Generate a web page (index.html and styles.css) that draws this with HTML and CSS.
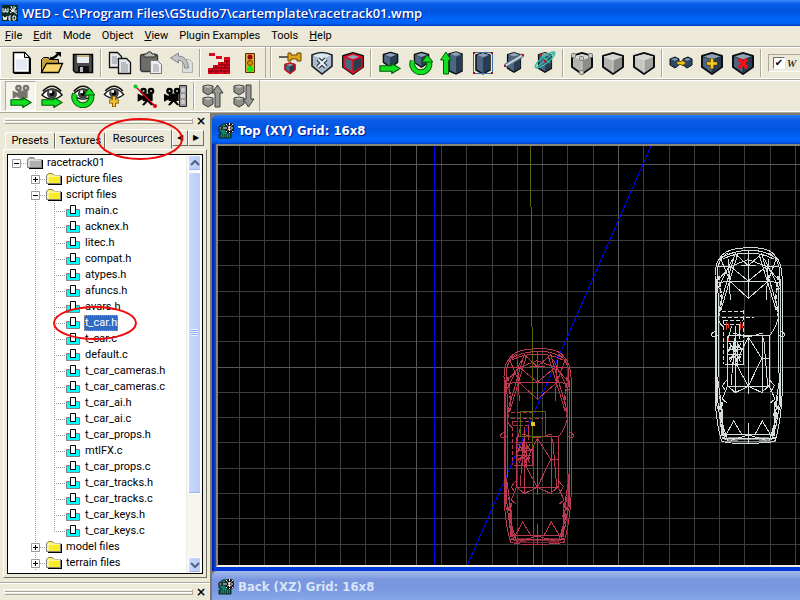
FILE: index.html
```html
<!DOCTYPE html>
<html lang="en">
<head>
    <meta charset="UTF-8">
    <meta name="viewport" content="width=device-width, initial-scale=1.0">
    <title>WED - racetrack01.wmp</title>
    <link rel="stylesheet" href="styles.css">
</head>
<body>
    <!-- icon set -->
    <svg class="defs" aria-hidden="true">
        <symbol id="logo" viewBox="0 0 16 16">
            <path fill="#0b2b22" d="M0 0h16v16H0z"/>
            <path stroke="#fff" fill="none" d="M1 3v4h2V4h1v3h2V3M8 4l3 3M14 2l-3 4M9 1l2 5M15 6h-5M8 8l3-2 4 3M12 1v4"/>
            <path stroke="#fff" fill="none" d="M1 11l1 4 1-3 1 3 1-4M7 11h2M7 13h2M7 15h2M7 11v4M11 11v4h2l1-2-1-2h-2"/>
        </symbol>
        <symbol id="view" viewBox="0 0 16 16">
            <path fill="#0f8468" stroke="#06231c" d="M1 4l4-3h4v9h4v5H1v-4h2V9H1z"/>
            <path stroke="#06231c" stroke-dasharray="1 1" d="M2 12h11M2 14h11"/>
            <path fill="#fff" stroke="#111" d="M1 4h3v2H1zM4 4h4v2H4z"/>
            <path stroke="#111" stroke-width="3" d="M8 1l7 8M15 1L8 9M11.5 0v10M7 5h9"/>
            <path stroke="#fff" stroke-dasharray="2 1" d="M8 1l7 8M15 1L8 9M11.5 0v10M7 5h9"/>
        </symbol>
        <symbol id="new" viewBox="0 0 24 24">
            <path fill="#fff" stroke="#000" stroke-width="1.5" d="M4.500 1.500h11l5 5v15h-16z"/>
            <path fill="#dfe8f0" stroke="#000" d="M15.500 1.500v5h5z"/>
            <path stroke="#000" stroke-width="2" d="M21 7v15H5" fill="none"/>
            <path fill="#e4eaf3" d="M7 8h11v11H7z"/>
        </symbol>
        <symbol id="open" viewBox="0 0 24 24">
            <path fill="#c9a03a" stroke="#000" d="M1.500 21V8.500l2-2h5l1 2h9V12"/>
            <path fill="#f7d76c" stroke="#000" stroke-width="1.300" d="M1.500 21.500l5-9h16l-4 9z"/>
            <path fill="none" stroke="#000" stroke-width="2.500" d="M10 7q4 1 8-4"/>
            <path d="M15 1h6v5z"/>
        </symbol>
        <symbol id="save" viewBox="0 0 24 24">
            <path fill="#4a4a4a" stroke="#000" stroke-width="1.500" d="M2.500 3.500h19v18h-17l-2-2z"/>
            <path fill="#e8edf2" d="M6 4h12v8H6z"/>
            <path fill="#c6b27a" d="M6 4h12v2H6z"/>
            <path fill="#111" d="M7 15h11v6H7z"/>
            <path fill="#b8bcc0" d="M9 16h3v5H9z"/>
        </symbol>
        <symbol id="copy" viewBox="0 0 24 24">
            <g fill="#e6e9ec" stroke="#111" stroke-width="1.300">
                <path d="M1.500 1.500h8l4 4v11h-12z"/>
                <path d="M10.500 7.500h8l4 4v11h-12z"/>
            </g>
            <path stroke="#8b9096" d="M4 6h5M4 8h6M4 10h6M4 12h5M13 12h5M13 14h7M13 16h7M13 18h7M13 20h7"/>
        </symbol>
        <symbol id="paste" viewBox="0 0 24 24">
            <rect x="1.500" y="3.500" width="17" height="17" rx="2" fill="#6d6d6a" stroke="#333" stroke-width="1.300"/>
            <path fill="#bcbcb8" stroke="#333" d="M5 6V3h3l1-2h3l1 2h3v3z"/>
            <path fill="#eceff1" stroke="#777" d="M11.500 9.500h7l4 4v9h-11z"/>
            <path stroke="#999" d="M14 14h5M14 16h6M14 18h6M14 20h6"/>
        </symbol>
        <symbol id="undo" viewBox="0 0 24 24">
            <path fill="#dedede" stroke="#b0b0ac" d="M12.500 8.500h7l3 3v10h-10z"/>
            <path fill="#c2c4c4" stroke="#85878a" d="M.500 7l8-5v3q9 0 10 12h-4q0-7-6-8v3z"/>
        </symbol>
        <symbol id="bricks" viewBox="0 0 24 24">
            <path fill="#e0081c" d="M2 2h6v3H2zM9 5h6v3H9zM17 6h6v17H1v-6h5v-3h5v-3h6z"/>
            <path stroke="#6c0010" d="M1 20h22M6 17h17M11 14h12M17 10h6M5 17v3M9 14v3M9 20v3M15 11v3M14 17v3M18 14v3M18 20v3M20 10v3M4 20v3"/>
        </symbol>
        <symbol id="lights" viewBox="0 0 24 24">
            <path fill="#d8a838" stroke="#5a3000" d="M7.500 2.500h9v19h-9z"/>
            <circle cx="12" cy="6" r="2.500" fill="#a00010"/>
            <circle cx="12" cy="12" r="2.500" fill="#d89400" stroke="#704000"/>
            <circle cx="12" cy="18" r="3" fill="#10e820"/>
        </symbol>
        <symbol id="cube" viewBox="0 0 24 24">
            <path fill="var(--left)" stroke="#0a0f14" stroke-width="2" stroke-linejoin="round" d="M2 5l10-3 10 3v11l-10 7-10-7z"/>
            <path fill="var(--top)" d="M3 5.500L12 3l9 2.500L12 9z"/>
            <path fill="var(--right)" d="M12 9l9-3.500v10L12 22z"/>
            <path fill="none" stroke="var(--edge)" stroke-width=".8" d="M3 5.500L12 9l9-3.500M12 9v12.500"/>
        </symbol>
        <symbol id="arrow" viewBox="0 0 24 12">
            <path fill="#10e020" stroke="#045c08" stroke-width="1.200" d="M1 3h13V0.500l9 5.500-9 5.500V9H1z"/>
        </symbol>
        <symbol id="pin" viewBox="0 0 24 24">
            <path stroke="#333" stroke-width="1.500" d="M0 6h11"/>
            <path fill="#e0a818" stroke="#6b4500" d="M9 2h3v2h6V2h4v8h-4V8h-6v2H9z"/>
            <use href="#cube" x="5" y="11" width="12" height="12"/>
            <path fill="none" stroke="#d01020" stroke-width="1.500" d="M6 13.500l5-1.500 5 1.500v5l-5 4-5-4z"/>
        </symbol>
        <symbol id="shieldx" viewBox="0 0 24 24">
            <path fill="#a9bccb" stroke="#182028" stroke-width="1.600" d="M2 4q10-5 20 0v11l-10 8-10-8z"/>
            <path fill="#dce6ee" d="M3 4.500q9-4 18 0L12 8z"/>
            <path stroke="#25303c" stroke-width="4.500" d="M8 8l8 8M16 8l-8 8"/>
            <path stroke="#e8eef4" stroke-width="2.200" d="M8 8l8 8M16 8l-8 8"/>
        </symbol>
        <symbol id="redcube" viewBox="0 0 24 24">
            <use href="#cube" width="24" height="24"/>
            <path fill="none" stroke="#e80c18" stroke-width="1.500" d="M3 6l9-3 9 3v10l-9 6-9-6zM3 6l9 3 9-3M12 9v13"/>
        </symbol>
        <symbol id="move" viewBox="0 0 24 24">
            <use href="#cube" x="4" y="0" width="17" height="17"/>
            <use href="#arrow" x="0" y="12" width="24" height="11"/>
        </symbol>
        <symbol id="spin" viewBox="0 0 24 24">
            <path fill="none" stroke="#045c08" stroke-width="6" d="M4 10a8.500 8 0 1 0 15-1"/>
            <path fill="none" stroke="#10e020" stroke-width="4" d="M4 10a8.500 8 0 1 0 15-1"/>
            <path fill="#10e020" stroke="#045c08" d="M13 11l5-7 6 7z"/>
        </symbol>
        <symbol id="rotate" viewBox="0 0 24 24">
            <use href="#cube" x="4" y="0" width="17" height="17"/>
            <use href="#spin" width="24" height="24"/>
        </symbol>
        <symbol id="scale" viewBox="0 0 24 24">
            <path fill="#4c6580" stroke="#0a0f14" stroke-width="1.500" d="M9 3l7-2 6 2v17l-6 3-7-3z"/>
            <path fill="#293c52" d="M16 6l6-2v15l-6 3z"/>
            <path fill="#8fa3b6" d="M10 3l6-2 5 2-5 2z"/>
            <path fill="#10e020" stroke="#045c08" d="M3.500 23V9h-3L6 1l5 8H8.500v14z"/>
        </symbol>
        <symbol id="tall" viewBox="0 0 24 24">
            <path fill="#4c6580" stroke="#0a0f14" stroke-width="1.500" d="M5 4l7-2 7 2v15l-7 4-7-4z"/>
            <path fill="#293c52" d="M12 7l7-3v14l-7 4z"/>
            <path fill="#8fa3b6" d="M6 4l6-2 6 2-6 2z"/>
        </symbol>
        <symbol id="bounds" viewBox="0 0 24 24">
            <use href="#tall" width="24" height="24"/>
            <path fill="none" stroke="#3a6ea5" d="M2.500 1.500h19v21h-19z"/>
            <path fill="#901020" d="M2 1h2v2H2zM20 1h2v2h-2zM2 21h2v2H2zM20 21h2v2h-2z"/>
        </symbol>
        <symbol id="cut" viewBox="0 0 24 24">
            <use href="#tall" width="24" height="22"/>
            <path stroke="#5f7386" stroke-width="4" d="M3 15L21 4"/>
            <path stroke="#c8d4e0" stroke-width="2" d="M3 15L21 4"/>
            <path fill="#a01828" d="M2 14h2v2H2zM20 3h2v2h-2z"/>
        </symbol>
        <symbol id="orbit" viewBox="0 0 24 24">
            <use href="#tall" width="24" height="22"/>
            <g fill="none" stroke="#35b9a8" stroke-width="1.500">
                <ellipse cx="12" cy="9" rx="12" ry="3.500" transform="rotate(-38 12 9)"/>
                <path d="M3 17L22 1M7 3l10 9"/>
            </g>
            <path fill="#d01818" d="M7 3h2v2H7zM11 9h2v2h-2z"/>
        </symbol>
        <symbol id="points" viewBox="0 0 24 24">
            <use href="#cube" width="24" height="24"/>
            <g fill="#c8c8c4" stroke="#777">
                <rect x="1.500" y="2.500" width="4" height="4" rx="1"/>
                <rect x="18.500" y="2.500" width="4" height="4" rx="1"/>
                <rect x="9.500" y="5.500" width="4" height="4" rx="1"/>
                <rect x="9.500" y="19.500" width="4" height="4" rx="1"/>
            </g>
        </symbol>
        <symbol id="link" viewBox="0 0 24 24">
            <path fill="#2c4866" stroke="#0a0f14" d="M1 8l5-2 4 2v6l-4 3-5-3zM14 8l5-2 4 2v6l-5 3-4-3z"/>
            <path fill="#7f97b0" d="M2 8l4-1 3 1-3 2zM15 8l4-1 3 1-4 2z"/>
            <path fill="#f4c020" stroke="#6b4a00" stroke-width=".8" d="M8 10.500h5V9l4 3-4 3v-1.500H8z"/>
        </symbol>
        <symbol id="addcube" viewBox="0 0 24 24">
            <use href="#cube" width="24" height="24"/>
            <path stroke="#5a3c00" stroke-width="4" d="M12 7v11M6.500 12.500h11"/>
            <path stroke="#fbc926" stroke-width="2.600" d="M12 7.500v10M7 12.500h10"/>
        </symbol>
        <symbol id="delcube" viewBox="0 0 24 24">
            <use href="#cube" width="24" height="24"/>
            <path stroke="#fa0d14" stroke-width="3.500" d="M8 8l8 9M16 8l-8 9"/>
        </symbol>
        <symbol id="camera" viewBox="0 0 24 24">
            <circle cx="9" cy="6" r="4"/>
            <circle cx="18" cy="6" r="4"/>
            <path d="M8 9h12v9H8zM2 9l6 3v4l-6 3zM11 18h6l4 5h-3l-4-4-4 4H7z"/>
            <path fill="#eee" d="M8 5h2v2H8zM17 5h2v2h-2z"/>
        </symbol>
        <symbol id="cammove" viewBox="0 0 24 24">
            <use href="#camera" x="2" y="-1" width="20" height="20" fill="#77756d"/>
            <use href="#arrow" x="0" y="13" width="24" height="11"/>
        </symbol>
        <symbol id="eye" viewBox="0 0 24 24">
            <path fill="#fff" stroke="#111" stroke-width="1.500" d="M1 12Q12-1 23 12q-11 9-22 0z"/>
            <circle cx="12" cy="10.500" r="5.500" fill="#444"/>
            <circle cx="12" cy="10.500" r="2.500"/>
            <path fill="#fff" d="M9 7h3v3H9z"/>
            <path fill="none" stroke="#111" stroke-width="1.800" d="M2 8Q12-3 22 8"/>
        </symbol>
        <symbol id="eyemove" viewBox="0 0 24 24">
            <use href="#eye" y="0" width="24" height="22"/>
            <use href="#arrow" x="0" y="13" width="24" height="11"/>
        </symbol>
        <symbol id="eyespin" viewBox="0 0 24 24">
            <use href="#eye" y="0" width="24" height="22"/>
            <use href="#spin" width="24" height="24"/>
        </symbol>
        <symbol id="eyeadd" viewBox="0 0 24 24">
            <use href="#eye" y="0" width="24" height="21"/>
            <path stroke="#6b4a00" stroke-width="4" d="M12 12v11M7 17.500h10"/>
            <path stroke="#f7c12a" stroke-width="2.500" d="M12 12.500v10M7.500 17.500h9"/>
        </symbol>
        <symbol id="camoff" viewBox="0 0 24 24">
            <use href="#camera" x="3" y="2" width="20" height="20"/>
            <path stroke="#e00010" stroke-width="1.500" d="M2 2l20 20"/>
            <circle cx="2.500" cy="2.500" r="2" fill="#18c030"/>
            <circle cx="22" cy="22" r="2" fill="#e00010"/>
        </symbol>
        <symbol id="camwall" viewBox="0 0 24 24">
            <path fill="#999" stroke="#222" d="M15.500 1.500h7v21h-7z"/>
            <circle cx="19" cy="6" r="2.200" fill="#ccc"/>
            <circle cx="19" cy="12" r="2.200" fill="#ccc"/>
            <circle cx="19" cy="18" r="2.200" fill="#ccc"/>
            <use href="#camera" x="-2" y="2" width="20" height="20"/>
        </symbol>
        <symbol id="blocks" viewBox="0 0 24 24">
            <g fill="#8f8f8c" stroke="#3c3c3a">
                <path d="M2 2l5-1 5 1v6l-5 3-5-3zM2 14l5-1 5 1v6l-5 3-5-3z"/>
                <path fill="#c4c4c0" stroke="none" d="M2.500 2.500L7 1.500l4.500 1L7 4zM2.500 14.500l4.500-1 4.500 1L7 16z"/>
            </g>
        </symbol>
        <symbol id="blocksup" viewBox="0 0 24 24">
            <use href="#blocks" width="24" height="24"/>
            <path fill="#999" stroke="#3c3c3a" d="M14 23V9h-3l5.500-8L22 9h-3v14z"/>
        </symbol>
        <symbol id="blocksdown" viewBox="0 0 24 24">
            <use href="#blocks" width="24" height="24"/>
            <path fill="#999" stroke="#3c3c3a" d="M14 1v14h-3l5.500 8 5.500-8h-3V1z"/>
        </symbol>
        <symbol id="folder" viewBox="0 0 16 16">
            <path fill="#000" d="M2 14h14V5h-1v8H2z"/>
            <path fill="var(--folder)" stroke="#808080" d="M.500 12.500v-8l2-2h4l2 2h6v8z"/>
            <path stroke="#fff" fill="none" d="M2 12V5h12"/>
        </symbol>
        <symbol id="file" viewBox="0 0 16 16">
            <path fill="#0ff" stroke="#808080" d="M1.500 6.500h13v7h-13z"/>
            <path fill="#fff" stroke="#000" d="M5.500 2.500h5v8h-5z"/>
        </symbol>
        <symbol id="car" viewBox="0 0 300 660" fill="none" stroke-width="3">
            <path d="M62 50Q80 28 142 26T222 50Q242 70 243 110V470Q238 560 222 605Q215 612 142 613T62 605Q46 560 42 470V110Q42 70 62 50z"/>
            <path d="M54 62Q90 36 142 34T230 62M48 95Q55 55 80 42M237 95Q230 55 205 42M66 60Q100 42 142 42T218 60"/>
            <path d="M50 90Q54 300 50 480Q56 560 74 604M235 90Q230 300 236 480Q230 560 211 604M46 120V500M239 120V500"/>
            <path d="M102 44L52 218M108 52L60 212M95 60L50 150M182 44L233 218M176 52L225 212M190 60L235 150"/>
            <path d="M102 44L142 80 182 44M142 34V178M120 80H165M52 84L88 82 142 126 196 82 235 84M82 60L88 184M202 60L196 184"/>
            <path d="M45 130L88 128H196L240 130M88 128L142 178 200 128M88 82L45 130M196 82L240 130M60 62L88 128M225 62L200 128"/>
            <path d="M88 82L142 62 196 82M52 218Q48 250 66 262M233 218Q236 250 206 290"/>
            <path d="M42 278Q26 284 34 292L50 290M240 278Q256 284 248 292L234 290"/>
            <path d="M80 290H204V440L180 462M80 290V440L104 462M102 290V460M184 290V460M142 290V464M80 442H204"/>
            <path d="M96 282L142 294 186 282M142 294L182 358 142 442 104 372M184 358H206M102 296L90 440M188 296L200 440"/>
            <path d="M142 442L100 462M142 442L186 462M104 372L142 294M80 420L64 440 76 460M204 420L220 440 208 460"/>
            <path d="M80 440L64 480 78 492M204 440L222 480 208 492M56 470L70 600M230 470L214 600M64 490L58 560 78 600M220 490L226 560 206 600"/>
            <path d="M50 420L66 530M236 420L218 530M48 500L80 606M238 500L204 606M66 510L62 590M220 510L222 590"/>
            <path d="M76 586L98 546 122 586M162 586L184 546 208 586M142 552V612M76 586H208V598H76zM90 604L142 588 196 604"/>
            <path d="M60 606H224M70 600H214M80 594L204 606M204 594L80 606" opacity=".6"/>
            <path d="M53 110L62 180 54 230M232 110L224 180 232 230M56 500L66 600M228 500L218 600" stroke-dasharray="14 5" stroke-width="5"/>
            <!-- driver and engine block -->
            <path d="M64 218H126M64 234H160M70 244H126M70 256H126M126 214V378M66 244V376" stroke-dasharray="12 6"/>
            <path d="M80 306H126V376H80zM86 312L120 370M120 312L86 370M84 330H124M82 346H124M96 306V378M110 306V378M92 260L80 306M104 260V306M116 256V300M72 376H126"/>
            <path d="M82 338L90 320 102 330 112 318 122 332M84 360L96 350 108 362 120 352" stroke-width="5"/>
        </symbol>
    </svg>

    <header class="title-bar">
        <svg class="logo"><use href="#logo"/></svg>
        <h1>WED - C:\Program Files\GStudio7\cartemplate\racetrack01.wmp</h1>
    </header>

    <nav class="menu-bar">
        <button><u>F</u>ile</button>
        <button><u>E</u>dit</button>
        <button>Mode</button>
        <button>Object</button>
        <button><u>V</u>iew</button>
        <button>Plugin Examples</button>
        <button>Tools</button>
        <button><u>H</u>elp</button>
    </nav>

    <div class="toolbar-row">
        <div class="toolbar">
            <button aria-label="New"><svg><use href="#new"/></svg></button>
            <button aria-label="Open"><svg><use href="#open"/></svg></button>
            <button aria-label="Save"><svg><use href="#save"/></svg></button>
            <span class="sep"></span>
            <button aria-label="Copy"><svg><use href="#copy"/></svg></button>
            <button aria-label="Paste"><svg><use href="#paste"/></svg></button>
            <button aria-label="Undo"><svg><use href="#undo"/></svg></button>
            <span class="sep"></span>
            <button aria-label="Build"><svg><use href="#bricks"/></svg></button>
            <button aria-label="Run"><svg><use href="#lights"/></svg></button>
        </div>
        <div class="toolbar grow">
            <button aria-label="Pin"><svg><use href="#pin"/></svg></button>
            <button aria-label="Deselect"><svg><use href="#shieldx"/></svg></button>
            <button aria-label="Select"><svg><use href="#redcube"/></svg></button>
            <span class="sep"></span>
            <button aria-label="Move"><svg><use href="#move"/></svg></button>
            <button aria-label="Rotate"><svg><use href="#rotate"/></svg></button>
            <button aria-label="Scale"><svg><use href="#scale"/></svg></button>
            <button aria-label="Bounds"><svg><use href="#bounds"/></svg></button>
            <button aria-label="Cut"><svg><use href="#cut"/></svg></button>
            <button aria-label="Orbit"><svg><use href="#orbit"/></svg></button>
            <span class="sep"></span>
            <button class="gray" aria-label="Vertices"><svg><use href="#points"/></svg></button>
            <button class="gray" aria-label="Edges"><svg><use href="#cube"/></svg></button>
            <button class="gray face" aria-label="Faces"><svg><use href="#cube"/></svg></button>
            <span class="sep"></span>
            <button aria-label="Link"><svg><use href="#link"/></svg></button>
            <button aria-label="Add"><svg><use href="#addcube"/></svg></button>
            <button aria-label="Remove"><svg><use href="#delcube"/></svg></button>
            <span class="sep"></span>
            <div class="lock-box">
                <input type="checkbox" id="lock" checked>
                <label for="lock">W</label>
            </div>
        </div>
    </div>

    <div class="toolbar-row">
        <div class="toolbar">
            <button class="pressed" aria-label="Move camera"><svg><use href="#cammove"/></svg></button>
            <button aria-label="Move view"><svg><use href="#eyemove"/></svg></button>
            <button aria-label="Rotate view"><svg><use href="#eyespin"/></svg></button>
            <button aria-label="Zoom view"><svg><use href="#eyeadd"/></svg></button>
            <button aria-label="Camera off"><svg><use href="#camoff"/></svg></button>
            <button aria-label="Camera to wall"><svg><use href="#camwall"/></svg></button>
            <span class="sep"></span>
            <button aria-label="Scope up"><svg><use href="#blocksup"/></svg></button>
            <button aria-label="Scope down"><svg><use href="#blocksdown"/></svg></button>
        </div>
    </div>

    <div class="workspace">
        <aside class="dock">
            <div class="gripper"><span></span><button aria-label="Close">×</button></div>
            <div class="tabs">
                <button class="tab">Presets</button>
                <button class="tab">Textures</button>
                <button class="tab active">Resources
                    <svg class="ring"><ellipse cx="43" cy="21" rx="42" ry="20"/></svg>
                </button>
                <button class="arrow" aria-label="Scroll left">◀</button>
                <button class="arrow" aria-label="Scroll right">▶</button>
            </div>
            <div class="page">
                <div class="tree-box">
                    <ul class="tree" id="tree"></ul>
                    <div class="scrollbar">
                        <button aria-label="Up"><svg viewBox="0 0 10 8"><path d="M1 6l4-4 4 4"/></svg></button>
                        <div class="thumb"><i></i></div>
                        <button aria-label="Down"><svg viewBox="0 0 10 8"><path d="M1 2l4 4 4-4"/></svg></button>
                    </div>
                </div>
            </div>
            <div class="gripper lower"><span></span><button aria-label="Close">×</button></div>
        </aside>

        <main class="desk">
            <section class="window">
                <h2><svg><use href="#view"/></svg>Top (XY) Grid: 16x8</h2>
                <svg class="viewport" shape-rendering="crispEdges">
                    <path class="grid" d="M21.500 0v2000M46.500 0v2000M71.500 0v2000M97.500 0v2000M122.500 0v2000M147.500 0v2000M172.500 0v2000M223.500 0v2000M248.500 0v2000M274.500 0v2000M299.500 0v2000M324.500 0v2000M349.500 0v2000M375.500 0v2000M425.500 0v2000M451.500 0v2000M476.500 0v2000M501.500 0v2000M526.500 0v2000M552.500 0v2000M577.500 0v2000"/>
                    <path class="grid" d="M0 44.500h2000M0 69.500h2000M0 94.500h2000M0 119.500h2000M0 145.500h2000M0 170.500h2000M0 195.500h2000M0 246.500h2000M0 271.500h2000M0 296.500h2000M0 322.500h2000M0 347.500h2000M0 372.500h2000M0 398.500h2000"/>
                    <path class="grid major" d="M198.500 0v2000M400.500 0v2000M0 18.500h2000M0 221.500h2000"/>
                    <path class="axis" d="M216 0v2000M433 0L249 420"/>
                    <use class="car picked" href="#car" x="272" y="194" width="100" height="220"/>
                    <use class="car" href="#car" x="483" y="93" width="100" height="220"/>
                    <path class="cursor" d="M312.500 0L316 420M302.500 265.500h25v25h-25z"/>
                    <path fill="#e8c820" d="M313 276h4v4h-4z"/>
                    <path class="lamp" d="M508.500 176v8M510.500 178v4M522.500 176v8M524.500 178v4M510.500 192v3"/>
                </svg>
            </section>
            <section class="window inactive">
                <h2><svg><use href="#view"/></svg>Back (XZ) Grid: 16x8</h2>
            </section>
        </main>
    </div>

    <script src="tree.js"></script>
</body>
</html>
```
FILE: styles.css
```css
* {
    box-sizing: border-box;
}

body {
    margin: 0;
    height: 100vh;
    display: flex;
    flex-direction: column;
    overflow: hidden;
    background: #ece9d8;
    font: 11px/16px Roboto, Tahoma, sans-serif;
    color: #000;
}

button {
    border: none;
    background: none;
    padding: 0;
    font: inherit;
    color: inherit;
}

.defs {
    display: none;
}

/* title and menu */
.title-bar {
    flex: none;
    height: 26px;
    display: flex;
    align-items: center;
    gap: 4px;
    padding: 0 2px;
    background: linear-gradient(#3a8cf8 0, #0a5ce8 15%, #0055e0 45%, #0066fc 75%, #0060f4 90%, #0038b8 100%);
}

.logo {
    width: 16px;
    height: 16px;
}

h1,
h2 {
    margin: 0;
    color: #fff;
    white-space: nowrap;
    text-shadow: 1px 1px #0a1883;
}

h1 {
    font: 600 13px/18px "Open Sans", "Trebuchet MS", sans-serif;
}

h2 {
    font: bold 13px/18px "DejaVu Sans Condensed", "Trebuchet MS", sans-serif;
}

.menu-bar {
    flex: none;
    height: 20px;
    display: flex;
    align-items: center;
    gap: 11px;
    padding-left: 5px;
}

/* toolbars */
.toolbar-row {
    flex: none;
    display: flex;
    height: 33px;
    border-top: 1px solid #aca899;
    border-bottom: 1px solid #fff;
    box-shadow: inset 0 1px #fff;
}

.toolbar {
    --top: #8fa3b6;
    --left: #4c6580;
    --right: #293c52;
    --edge: #1b2838;
    display: flex;
    align-items: center;
    padding-left: 4px;
    border-left: 1px solid #fff;
    border-right: 1px solid #aca899;
}

.toolbar.grow {
    flex: 1;
    min-width: 0;
    margin-left: 4px;
    border-left: 1px solid #aca899;
    border-right: none;
    box-shadow: inset 1px 0 #fff;
}

.toolbar button {
    flex: none;
    width: 31px;
    height: 30px;
    display: flex;
    align-items: center;
    justify-content: center;
}

.toolbar svg {
    width: 24px;
    height: 24px;
}

.toolbar .pressed {
    border: 1px solid;
    border-color: #aca899 #fff #fff #aca899;
    background: #f5f4ec;
}

.toolbar .gray {
    --top: #d6d6d2;
    --left: #b2b2ae;
    --right: #8c8c88;
    --edge: #e2e2de;
}

.toolbar .face {
    --left: #c6c6c2;
    --right: #a2a29e;
}

.sep {
    flex: none;
    width: 2px;
    height: 28px;
    margin: 0 2px;
    border-left: 1px solid #aca899;
    border-right: 1px solid #fff;
}

.lock-box {
    flex: 1;
    min-width: 0;
    height: 18px;
    margin-left: 4px;
    padding-left: 4px;
    display: flex;
    align-items: center;
    overflow: hidden;
    border: 1px solid #aca899;
    border-right: none;
    border-bottom-color: #fff;
}

.lock-box input {
    flex: none;
    appearance: none;
    width: 12px;
    height: 12px;
    margin: 0;
    border: 1px solid;
    border-color: #716f64 #fff #fff #716f64;
    background: #fff;
}

.lock-box input:checked::before {
    content: "✔";
    display: block;
    font: 10px/10px "DejaVu Sans", sans-serif;
    text-align: center;
}

.lock-box label {
    margin-left: 2px;
    font: italic 11px/12px "Liberation Serif", serif;
}

/* left dock */
.workspace {
    flex: 1;
    min-height: 0;
    display: flex;
    border-top: 1px solid #aca899;
}

.dock {
    flex: none;
    width: 210px;
    display: flex;
    flex-direction: column;
}

.gripper {
    flex: none;
    height: 16px;
    display: flex;
    align-items: center;
    gap: 3px;
    padding-left: 4px;
}

.gripper span {
    width: 189px;
    height: 6px;
    border: 1px solid;
    border-color: #fff #aca899 #aca899 #fff;
    background: linear-gradient(#aca899 50%, #fff 50%);
    background-size: 100% 2px;
    background-position: 0 1px;
    background-repeat: no-repeat;
}

.gripper button {
    width: 8px;
    font: bold 12px/12px "DejaVu Sans", sans-serif;
}

.gripper.lower {
    height: 18px;
    border-top: 1px solid #aca899;
    box-shadow: inset 0 1px #fff;
}

.tabs {
    flex: none;
    height: 20px;
    display: flex;
    align-items: flex-end;
    padding-left: 5px;
}

.tab {
    position: relative;
    width: 50px;
    height: 17px;
    border: 1px solid;
    border-color: #fff #716f64 transparent #fff;
    border-radius: 2px 2px 0 0;
}

.tab.active {
    width: 67px;
    height: 20px;
}

.ring {
    position: absolute;
    left: -9px;
    top: -12px;
    width: 86px;
    height: 42px;
    z-index: 2;
    overflow: visible;
    pointer-events: none;
}

.ring ellipse {
    fill: none;
    stroke: #f00a0a;
    stroke-width: 2;
}

.tabs .arrow {
    width: 16px;
    height: 16px;
    margin-bottom: 3px;
    border: 1px solid;
    border-color: #fff #716f64 #716f64 #fff;
    font: 8px/12px "DejaVu Sans", sans-serif;
}

.page {
    flex: 1;
    min-height: 0;
    display: flex;
    margin: 0 3px 4px;
    padding: 4px 3px 3px;
    border: 1px solid;
    border-color: #fff #716f64 #716f64 #fff;
}

.tree-box {
    flex: 1;
    min-width: 0;
    display: flex;
    border: 1px solid #000;
    background: #fff;
    overflow: hidden;
}

.tree {
    flex: 1;
    min-width: 0;
    margin: 0;
    padding: 0;
    list-style: none;
}

.tree li {
    position: relative;
    display: flex;
    height: 16px;
    white-space: nowrap;
}

.tree svg.icon {
    flex: none;
    width: 16px;
    height: 16px;
    margin-right: 3px;
}

.tree li.root {
    --folder: #b0b0b0;
}

.tree li.folder {
    --folder: #f8ec28;
}

/* dotted connector cells */
.rail,
.toggle {
    flex: none;
    width: 19px;
    height: 16px;
}

.rail {
    background: repeating-linear-gradient(#999 0 1px, transparent 1px 2px) 8px 0 / 1px 16px no-repeat;
}

.rail.branch {
    background:
        repeating-linear-gradient(#999 0 1px, transparent 1px 2px) 8px 0 / 1px 16px no-repeat,
        repeating-linear-gradient(90deg, #999 0 1px, transparent 1px 2px) 8px 8px / 11px 1px no-repeat;
}

.rail.last {
    background-size: 1px 8px, 11px 1px;
}

.rail.blank {
    background: none;
}

.toggle {
    padding: 4px 0 0 4px;
    background:
        repeating-linear-gradient(#999 0 1px, transparent 1px 2px) 8px 0 / 1px 16px no-repeat,
        repeating-linear-gradient(90deg, #999 0 1px, transparent 1px 2px) 13px 8px / 5px 1px no-repeat;
}

.root .toggle {
    background-size: 0 0, 5px 1px;
}

.toggle svg {
    display: block;
    width: 9px;
    height: 9px;
}

.label {
    padding: 0 1px;
}

.selected .label {
    background: #316ac5;
    color: #fff;
    outline: 1px dotted #d8954a;
    outline-offset: -1px;
}

.tree .ring {
    left: 45px;
    top: -9px;
    width: 84px;
    height: 34px;
}

.scrollbar {
    flex: none;
    width: 16px;
    display: grid;
    grid-template-rows: 16px 325fr 62fr 16px;
    gap: 1px;
    padding: 0 1px;
    background: #f6f5ee;
    border-left: 1px solid #eeede5;
}

.scrollbar button,
.thumb {
    display: flex;
    align-items: center;
    justify-content: center;
    border: 1px solid #fff;
    border-radius: 2px;
    background: linear-gradient(90deg, #c9d8fc, #b9ccf8);
    box-shadow: inset 0 -1px #98b0e4;
}

.scrollbar button:last-child {
    grid-row: 4;
}

.scrollbar svg {
    width: 10px;
    height: 8px;
    fill: none;
    stroke: #4d6185;
    stroke-width: 2;
}

.thumb i {
    width: 7px;
    height: 7px;
    background: repeating-linear-gradient(#eef4fe 0 1px, #8cb0f8 1px 2px);
}

/* view windows */
.desk {
    flex: 1;
    min-width: 0;
    display: flex;
    flex-direction: column;
    border-left: 2px solid #7d7b70;
    border-top: 2px solid #7d7b70;
    background: #808080;
}

.window {
    flex: 1;
    min-height: 0;
    display: flex;
    flex-direction: column;
    padding: 0 0 4px 4px;
    border-radius: 6px 0 0 0;
    background: linear-gradient(90deg, #0019a8, #0a50e8 4px, #0038d8 5px);
}

.window h2 {
    flex: none;
    height: 29px;
    margin-left: -4px;
    padding: 3px 0 0 6px;
    display: flex;
    align-items: center;
    gap: 4px;
    border-radius: 6px 0 0 0;
    background: linear-gradient(#2a80f8 0, #0a5ce8 18%, #0055e0 50%, #0066fc 80%, #0060f4 92%, #0040c8 100%);
}

.window h2 svg {
    width: 16px;
    height: 16px;
}

.window.inactive {
    flex: none;
    padding: 0;
    background: #7a96df;
}

.window.inactive h2 {
    margin-left: 0;
    color: #d8e4f8;
    text-shadow: none;
    background: linear-gradient(#a3bcec 0, #7a96df 30%, #7a96df 60%, #86a8ea 100%);
}

.viewport {
    flex: 1;
    width: 100%;
    min-height: 0;
    border: 2px solid #8a877a;
    border-right: none;
    border-bottom-color: #f4f0e4;
    background: #000;
}

.grid {
    stroke: #3c3c3c;
}

.grid.major {
    stroke: #585858;
}

.axis {
    stroke: #00f;
    fill: none;
}

.cursor {
    stroke: #5c6408;
    fill: none;
}

.car {
    stroke: #d4dcdc;
}

.car.picked {
    stroke: #b83850;
}

.lamp {
    stroke: #e83020;
}
```
FILE: tree.js
```javascript
const files = [
    'main.c', 'acknex.h', 'litec.h', 'compat.h', 'atypes.h', 'afuncs.h', 'avars.h',
    't_car.h', 't_car.c', 'default.c', 't_car_cameras.h', 't_car_cameras.c',
    't_car_ai.h', 't_car_ai.c', 't_car_props.h', 'mtlFX.c', 't_car_props.c',
    't_car_tracks.h', 't_car_tracks.c', 't_car_keys.h', 't_car_keys.c'
];

const tree = document.getElementById('tree');

function toggle(open) {
    const mark = open ? 'M2 4.5h5' : 'M2 4.5h5M4.5 2v5';
    return `<span class="toggle"><svg><path fill="#fff" stroke="#999" d="M.5 .5h8v8h-8z"/><path stroke="#000" d="${mark}"/></svg></span>`;
}

function addFolder(name, open, root) {
    const li = document.createElement('li');
    li.className = root ? 'root' : 'folder';
    li.innerHTML = `
        ${root ? '' : '<span class="rail blank"></span>'}${toggle(open)}
        <svg class="icon"><use href="#folder"/></svg>
        <span class="label">${name}</span>
    `;
    tree.appendChild(li);
}

function addFile(name, last) {
    const li = document.createElement('li');
    const selected = name === 't_car.h';
    if (selected) {
        li.className = 'selected';
    }
    li.innerHTML = `
        <span class="rail blank"></span><span class="rail"></span>
        <span class="rail branch${last ? ' last' : ''}"></span>
        <svg class="icon"><use href="#file"/></svg>
        <span class="label">${name}</span>
        ${selected ? '<svg class="ring"><ellipse cx="42" cy="17" rx="41" ry="16"/></svg>' : ''}
    `;
    tree.appendChild(li);
}

addFolder('racetrack01', true, true);
addFolder('picture files', false);
addFolder('script files', true);
files.forEach((name, i) => addFile(name, i === files.length - 1));
addFolder('model files', false);
addFolder('terrain files', false);
```
